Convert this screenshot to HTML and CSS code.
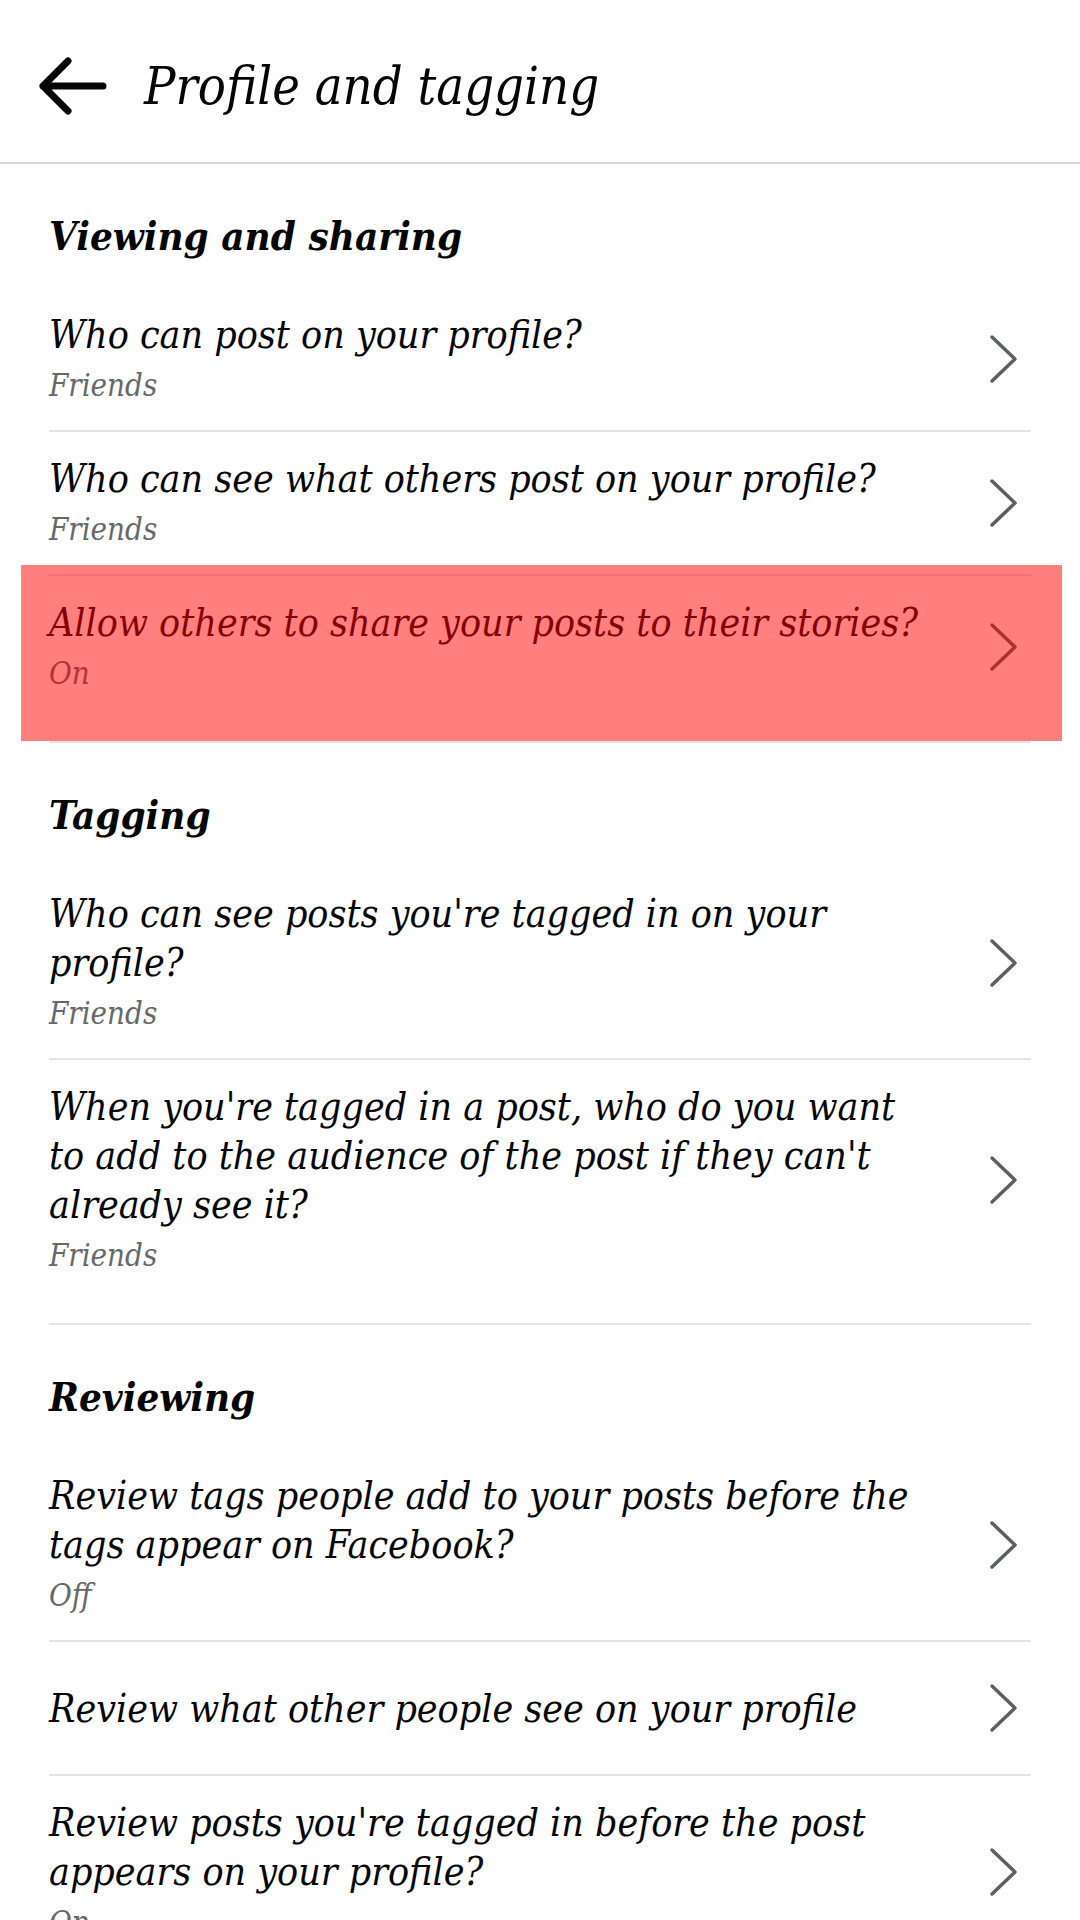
FILE: index.html
```html
<!DOCTYPE html>
<html lang="en">
<head>
  <meta charset="UTF-8">
  <meta name="viewport" content="width=device-width, initial-scale=1.0">
  <title>Profile and tagging</title>
  <link rel="stylesheet" href="styles.css">
</head>
<body>
  <header class="topbar">
    <svg class="back" width="72" height="60" viewBox="0 0 72 60">
      <path d="M6 30 H66 M6 30 L31 5 M6 30 L31 55" />
    </svg>
    <h1 class="title">Profile and tagging</h1>
  </header>

  <main class="settings">
    <section class="group">
      <h2 class="group-title">Viewing and sharing</h2>
      <ul class="list">
        <li class="item">
          <div class="item-text">
            <p class="item-label">Who can post on your profile?</p>
            <p class="item-value">Friends</p>
          </div>
          <svg class="chevron" width="32" height="50" viewBox="0 0 32 50"><path d="M4 3 L27 25 L4 47" /></svg>
        </li>
        <li class="item">
          <div class="item-text">
            <p class="item-label">Who can see what others post on your profile?</p>
            <p class="item-value">Friends</p>
          </div>
          <svg class="chevron" width="32" height="50" viewBox="0 0 32 50"><path d="M4 3 L27 25 L4 47" /></svg>
        </li>
        <li class="item item-last highlighted">
          <div class="item-text">
            <p class="item-label">Allow others to share your posts to their stories?</p>
            <p class="item-value">On</p>
          </div>
          <svg class="chevron" width="32" height="50" viewBox="0 0 32 50"><path d="M4 3 L27 25 L4 47" /></svg>
        </li>
      </ul>
    </section>

    <section class="group">
      <h2 class="group-title">Tagging</h2>
      <ul class="list">
        <li class="item">
          <div class="item-text">
            <p class="item-label">Who can see posts you're tagged in on your<br>profile?</p>
            <p class="item-value">Friends</p>
          </div>
          <svg class="chevron" width="32" height="50" viewBox="0 0 32 50"><path d="M4 3 L27 25 L4 47" /></svg>
        </li>
        <li class="item item-last">
          <div class="item-text">
            <p class="item-label">When you're tagged in a post, who do you want<br>to add to the audience of the post if they can't<br>already see it?</p>
            <p class="item-value">Friends</p>
          </div>
          <svg class="chevron" width="32" height="50" viewBox="0 0 32 50"><path d="M4 3 L27 25 L4 47" /></svg>
        </li>
      </ul>
    </section>

    <section class="group">
      <h2 class="group-title">Reviewing</h2>
      <ul class="list">
        <li class="item">
          <div class="item-text">
            <p class="item-label">Review tags people add to your posts before the<br>tags appear on Facebook?</p>
            <p class="item-value">Off</p>
          </div>
          <svg class="chevron" width="32" height="50" viewBox="0 0 32 50"><path d="M4 3 L27 25 L4 47" /></svg>
        </li>
        <li class="item item-single">
          <div class="item-text">
            <p class="item-label">Review what other people see on your profile</p>
          </div>
          <svg class="chevron" width="32" height="50" viewBox="0 0 32 50"><path d="M4 3 L27 25 L4 47" /></svg>
        </li>
        <li class="item">
          <div class="item-text">
            <p class="item-label">Review posts you're tagged in before the post<br>appears on your profile?</p>
            <p class="item-value">On</p>
          </div>
          <svg class="chevron" width="32" height="50" viewBox="0 0 32 50"><path d="M4 3 L27 25 L4 47" /></svg>
        </li>
      </ul>
    </section>
  </main>
</body>
</html>
```

FILE: styles.css
```css
/* General */
body {
  margin: 0;
  background: #ffffff;
  color: #050505;
  font-family: "DejaVu Serif Condensed", "DejaVu Serif", serif;
  font-stretch: condensed;
  font-style: italic;
  overflow: hidden;
}

/* Top bar */
.topbar {
  height: 152px;
  padding-top: 10px;
  display: flex;
  align-items: center;
  border-bottom: 2px solid #d4d5d9;
}

.back {
  margin-left: 37px;
  flex-shrink: 0;
}

.back path {
  fill: none;
  stroke: #050505;
  stroke-width: 7;
  stroke-linecap: round;
  stroke-linejoin: round;
}

.title {
  margin: 0 0 0 35px;
  font-size: 52px;
  font-weight: normal;
  line-height: 60px;
}

/* Groups */
.group-title {
  margin: 0 49px;
  padding: 44px 0 24px;
  font-size: 40px;
  font-weight: bold;
  line-height: 56px;
}

.list {
  list-style: none;
  margin: 0 49px;
  padding: 0;
}

.item {
  position: relative;
  display: flex;
  align-items: center;
  padding: 22px 11px 22px 0;
  border-bottom: 2px solid #e3e4e8;
}

.item-last {
  padding-bottom: 45px;
}

.item-single {
  padding-top: 41px;
  padding-bottom: 41px;
}

.item-text {
  flex: 1;
}

.item-label {
  margin: 0;
  font-size: 39px;
  line-height: 49px;
}

.item-value {
  margin: 4px 0 0;
  font-size: 31px;
  line-height: 45px;
  color: #67686c;
}

.chevron {
  flex-shrink: 0;
}

.chevron path {
  fill: none;
  stroke: #5e5f63;
  stroke-width: 3.5;
  stroke-linecap: round;
  stroke-linejoin: round;
}

/* Red selection marker over one row */
.highlighted::after {
  content: "";
  position: absolute;
  top: -11px;
  left: -28px;
  right: -31px;
  bottom: 0;
  background: rgba(255, 0, 0, 0.5);
}
```
